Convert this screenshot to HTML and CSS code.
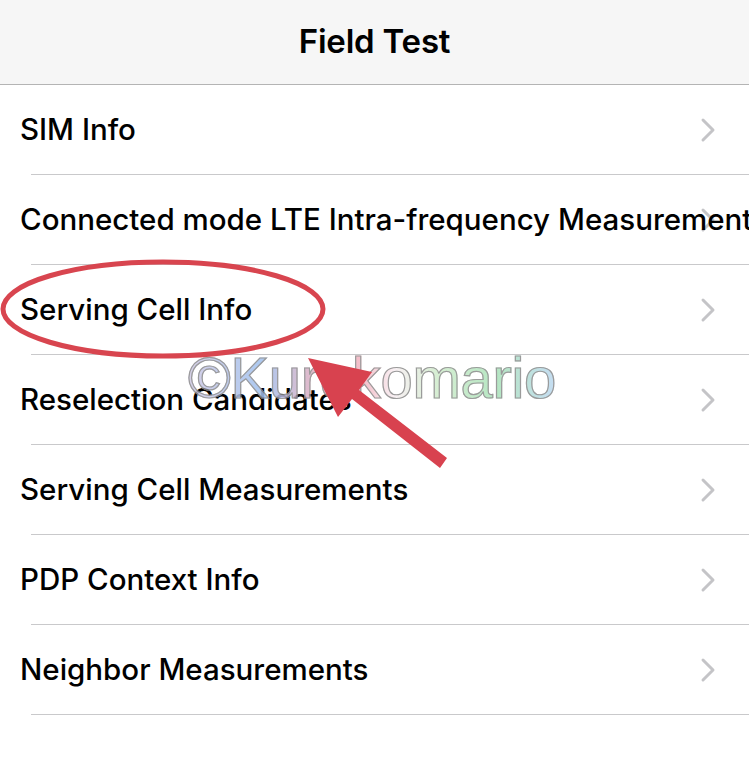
FILE: index.html
```html
<!DOCTYPE html>
<html lang="en">
<head>
    <meta charset="UTF-8">
    <meta name="viewport" content="width=device-width, initial-scale=1.0">
    <title>Field Test</title>
    <link rel="stylesheet" href="styles.css">
</head>
<body>
    <div class="screen">
        <header class="nav-bar">
            <h1 class="nav-title">Field Test</h1>
        </header>

        <ul class="menu">
            <li class="menu-item">
                <span class="label">SIM Info</span>
                <svg class="chevron" width="16" height="26" viewBox="0 0 16 26"><polyline points="3,3 13,13 3,23"/></svg>
            </li>
            <li class="menu-item">
                <span class="label">Connected mode LTE Intra-frequency Measurement</span>
                <svg class="chevron" width="16" height="26" viewBox="0 0 16 26"><polyline points="3,3 13,13 3,23"/></svg>
            </li>
            <li class="menu-item">
                <span class="label">Serving Cell Info</span>
                <svg class="chevron" width="16" height="26" viewBox="0 0 16 26"><polyline points="3,3 13,13 3,23"/></svg>
            </li>
            <li class="menu-item">
                <span class="label">Reselection Candidates</span>
                <svg class="chevron" width="16" height="26" viewBox="0 0 16 26"><polyline points="3,3 13,13 3,23"/></svg>
            </li>
            <li class="menu-item">
                <span class="label">Serving Cell Measurements</span>
                <svg class="chevron" width="16" height="26" viewBox="0 0 16 26"><polyline points="3,3 13,13 3,23"/></svg>
            </li>
            <li class="menu-item">
                <span class="label">PDP Context Info</span>
                <svg class="chevron" width="16" height="26" viewBox="0 0 16 26"><polyline points="3,3 13,13 3,23"/></svg>
            </li>
            <li class="menu-item">
                <span class="label">Neighbor Measurements</span>
                <svg class="chevron" width="16" height="26" viewBox="0 0 16 26"><polyline points="3,3 13,13 3,23"/></svg>
            </li>
        </ul>

        <!-- annotations drawn on top of the screenshot -->
        <div class="watermark">©Kurokomario</div>
        <svg class="markup" width="749" height="766" viewBox="0 0 749 766">
            <ellipse cx="163" cy="309" rx="160" ry="47" fill="none" stroke="#d8454f" stroke-width="5"/>
            <polygon points="308,358 372,372 359,390 447,458 440,468 352,399 338,417" fill="#d8424f"/>
        </svg>
    </div>
</body>
</html>
```

FILE: styles.css
```css
* {
    margin: 0;
    padding: 0;
    box-sizing: border-box;
}

body {
    font-family: 'Inter', 'Roboto', sans-serif;
    background: #ffffff;
    color: #000;
    overflow: hidden;
}

.screen {
    position: relative;
    width: 749px;
    height: 766px;
    overflow: hidden;
}

.nav-bar {
    height: 85px;
    background: #f6f6f6;
    border-bottom: 1px solid #b4b4b4;
    display: flex;
    align-items: center;
    justify-content: center;
    padding-bottom: 3px;
}

.nav-title {
    font-size: 33px;
    font-weight: 600;
    letter-spacing: -0.2px;
}

.menu {
    list-style: none;
}

.menu-item {
    position: relative;
    height: 90px;
    display: flex;
    align-items: center;
    border-bottom: 1px solid #c9c9cb;
    margin-left: 31px;
}

.label {
    margin-left: -11px;
    margin-top: -2px;
    font-size: 29.5px;
    font-weight: 500;
    white-space: nowrap;
    position: relative;
    z-index: 1;
}

.chevron {
    position: absolute;
    left: 669px;
    top: 32px;
    fill: none;
    stroke: #c4c4c7;
    stroke-width: 3;
    stroke-linecap: round;
    stroke-linejoin: round;
}

.watermark {
    position: absolute;
    left: 188px;
    top: 344px;
    font-family: 'Liberation Sans', sans-serif;
    font-size: 58px;
    letter-spacing: -0.3px;
    background: linear-gradient(90deg, #cfc8e4 0%, #9fc0ee 20%, #f0a9b4 38%, #f2b8c4 48%, #f8eef2 56%, #cfeccb 68%, #a9e2b9 84%, #bcd8f2 100%);
    -webkit-background-clip: text;
    background-clip: text;
    color: transparent;
    -webkit-text-stroke: 1.2px #8a8a8a;
    opacity: 0.85;
    z-index: 2;
}

.markup {
    position: absolute;
    left: 0;
    top: 0;
    z-index: 3;
}
```
